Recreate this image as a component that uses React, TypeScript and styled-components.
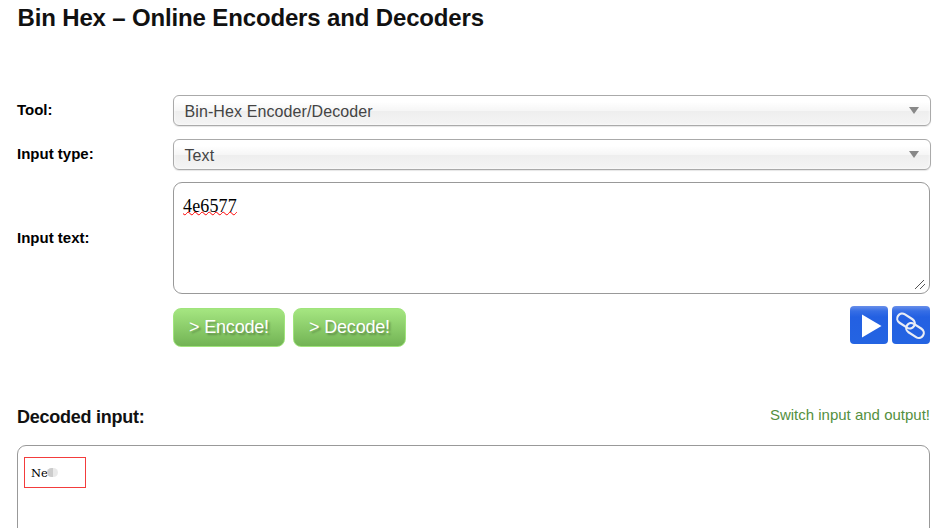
import React from "react";
import styled, { createGlobalStyle } from "styled-components";

const GlobalStyle = createGlobalStyle`
  * { box-sizing: border-box; }
  html, body { margin: 0; background: #fff; }
  body { font-family: "Liberation Sans", Arial, sans-serif; color: #111; overflow: hidden; }
`;

const Page = styled.main`
  width: 939px;
  height: 528px;
  padding: 4px 8px 0 17px;
  overflow: hidden;
`;

const Title = styled.h1`
  margin: 0 0 63px;
  padding-left: 0.5px;
  font-size: 24px;
  line-height: 28px;
  font-weight: bold;
  letter-spacing: -0.15px;
  white-space: nowrap;
`;

const Form = styled.form`
  display: grid;
  grid-template-columns: 156px 758px;
  grid-template-rows: 31px 31px 112px;
  row-gap: 13px;
`;

const Label = styled.label<{ $lift?: number }>`
  align-self: center;
  font-size: 15px;
  line-height: 18px;
  font-weight: bold;
  color: #000;
  padding-bottom: ${(p) => p.$lift ?? 0}px;
`;

const Select = styled.div`
  display: flex;
  align-items: center;
  justify-content: space-between;
  height: 31px;
  padding: 2px 11px 0 10.5px;
  border: 1px solid #aaa;
  border-radius: 6px;
  background: linear-gradient(#fff 20%, #f6f6f6 50%, #eee 52%, #f4f4f4 100%);
  box-shadow: inset 0 0 3px #fff, 0 1px 1px rgba(0, 0, 0, 0.1);
  color: #444;
  font-size: 16px;
  line-height: 20px;
  letter-spacing: 0.1px;
`;

const Arrow = styled.span`
  margin-top: -2px;
  border: 5px solid transparent;
  border-top: 7px solid #888;
  border-bottom: 0;
`;

const TextBox = styled.div`
  display: flex;
  justify-content: space-between;
  width: 757px;
  height: 112px;
  margin-top: -1px;
  padding: 13px 3px 2px 9px;
  border: 1px solid #999;
  border-radius: 9px;
`;

const Value = styled.span`
  display: block;
  width: 54px;
  height: 17px;
  font: 18px/20px "Liberation Serif", serif;
  letter-spacing: 0.15px;
  color: #000;
  text-decoration: underline wavy #f00 1px;
  text-decoration-skip-ink: none;
  text-underline-offset: -1px;
`;

const Grip = styled.svg`
  align-self: flex-end;
`;

const Actions = styled.div`
  display: flex;
  align-items: flex-start;
  height: 40px;
  margin: 11px 0 0 156px;
  padding-right: 1px;
`;

const Button = styled.button<{ $width: number }>`
  width: ${(p) => p.$width}px;
  height: 39px;
  margin: 2px 8px 0 0;
  padding: 0 0 2px;
  border: 1px solid #a0e47c;
  border-radius: 8px;
  background: linear-gradient(#a5e681, #72b354);
  color: #fff;
  font: 18px/20px "Liberation Sans", Arial, sans-serif;
  letter-spacing: -0.2px;
  text-shadow: 2px 2px 2px rgba(0, 0, 0, 0.28);
  white-space: nowrap;
`;

const IconGroup = styled.div`
  display: flex;
  gap: 4px;
  margin-left: auto;
`;

const IconButton = styled.span`
  display: block;
  width: 38px;
  height: 38px;
  border-radius: 4px;
  background: linear-gradient(#698fea 0, #366ee5 5px, #2360e2 11px, #2464e2 100%);
`;

const OutputHeader = styled.div`
  display: flex;
  justify-content: space-between;
  align-items: flex-start;
  margin-top: 59px;
  height: 40px;
  padding-right: 1px;
`;

const Heading = styled.h2`
  margin: 0;
  padding-top: 1px;
  font-size: 18px;
  line-height: 22px;
  letter-spacing: -0.25px;
`;

const SwitchLink = styled.a`
  font-size: 15px;
  line-height: 20px;
  color: #549040;
`;

const Output = styled.section`
  width: 913px;
  height: 110px;
  padding: 11px 6px;
  border: 1px solid #999;
  border-radius: 9px;
`;

const Highlight = styled.div`
  display: flex;
  align-items: center;
  width: 62px;
  height: 31px;
  padding: 0 0 0 6px;
  border: 1px solid #f33c3c;
  color: #000;
  font: 11.5px/16px "DejaVu Serif", serif;
  letter-spacing: 0;
`;

const Smudge = styled.span`
  width: 11px;
  height: 9px;
  margin-left: -1px;
  border-radius: 5px;
  background: linear-gradient(90deg, #ccc 50%, #e9e9e9 50%);
`;

export default function App() {
  return (
    <Page>
      <GlobalStyle />
      <Title>Bin Hex – Online Encoders and Decoders</Title>
      <Form>
        <Label $lift={1}>Tool:</Label>
        <Select>Bin-Hex Encoder/Decoder<Arrow /></Select>
        <Label $lift={1}>Input type:</Label>
        <Select>Text<Arrow /></Select>
        <Label $lift={2}>Input text:</Label>
        <TextBox>
          <Value>4e6577</Value>
          <Grip width="12" height="12" viewBox="0 0 12 12">
            <path d="M1 10L10 1M6 10L11 5" stroke="#555" fill="none" />
          </Grip>
        </TextBox>
      </Form>
      <Actions>
        <Button $width={112}>&gt; Encode!</Button>
        <Button $width={113}>&gt; Decode!</Button>
        <IconGroup>
          <IconButton>
            <svg width="38" height="38" viewBox="0 0 38 38">
              <path d="M12 8.5L31.5 20L12 31.5Z" fill="#fff" />
            </svg>
          </IconButton>
          <IconButton>
            <svg width="38" height="38" viewBox="0 0 38 38">
              <g fill="none" stroke="#e9edf5" strokeWidth="2.2">
                <rect x="4.5" y="10" width="19" height="10" rx="5" transform="rotate(33 14 15)" />
                <rect x="13.5" y="19.5" width="19" height="10" rx="5" transform="rotate(33 23 24.5)" />
              </g>
            </svg>
          </IconButton>
        </IconGroup>
      </Actions>
      <OutputHeader>
        <Heading>Decoded input:</Heading>
        <SwitchLink>Switch input and output!</SwitchLink>
      </OutputHeader>
      <Output>
        <Highlight>Ne<Smudge /></Highlight>
      </Output>
    </Page>
  );
}
